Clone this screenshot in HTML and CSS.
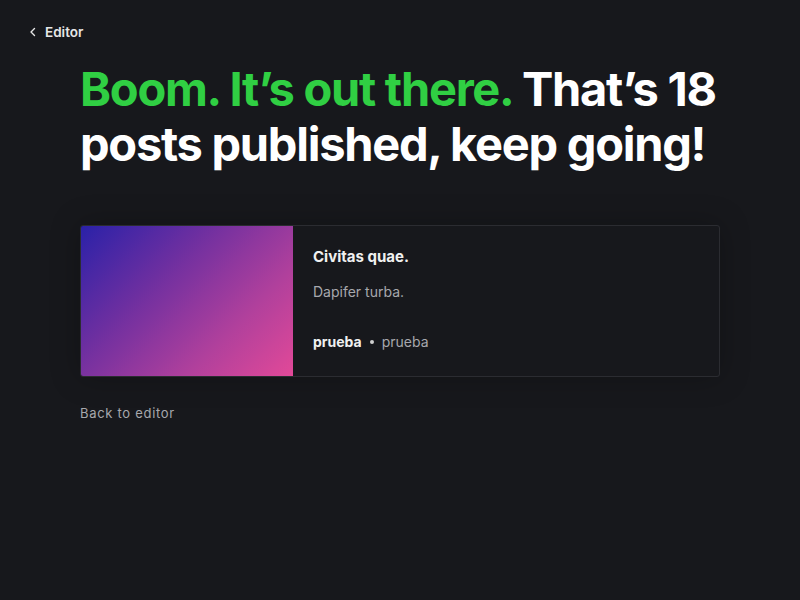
FILE: index.html
```html
<!DOCTYPE html>
<html>
<head>
<meta charset="utf-8">
<link rel="stylesheet" href="styles.css">
</head>
<body>
<header class="topbar">
  <a class="back-link" href="#">
    <svg class="chev" width="8" height="10" viewBox="0 0 8 10"><path d="M5.5 1.5 L2 5 L5.5 8.5" fill="none" stroke="#e6e6e6" stroke-width="1.4" stroke-linecap="round" stroke-linejoin="round"/></svg>
    <span>Editor</span>
  </a>
</header>
<main class="content">
  <h1 class="title"><span class="green">Boom. It’s out there.</span> That’s 18 posts published, keep going!</h1>
  <div class="card">
    <div class="thumb"></div>
    <div class="card-body">
      <div class="card-title">Civitas quae.</div>
      <div class="card-excerpt">Dapifer turba.</div>
      <div class="card-meta"><strong>prueba</strong><span class="dot"></span><span class="muted">prueba</span></div>
    </div>
  </div>
  <a class="back-editor" href="#">Back to editor</a>
</main>
</body>
</html>
```
FILE: styles.css
```css
html, body {
  margin: 0;
  padding: 0;
  background: #17181c;
  font-family: Inter, "Noto Sans", sans-serif;
  color: #fff;
}
a { text-decoration: none; }
.topbar {
  padding: 21px 0 0 29px;
  height: 20px;
}
.back-link {
  display: inline-flex;
  align-items: center;
  gap: 8px;
  color: #e6e6e6;
  font-size: 13.5px;
  font-weight: 600;
  line-height: 16px;
}
.content {
  padding: 0 80px;
}
.title {
  margin: 20px 0 0;
  font-size: 47px;
  font-weight: 700;
  line-height: 55px;
  letter-spacing: -0.027em;
  color: #fff;
}
.green { color: #30cf43; }
.card {
  margin-top: 54px;
  display: flex;
  height: 150px;
  border: 1px solid #2b2c31;
  border-radius: 3px;
  overflow: hidden;
  box-shadow: 0 0 30px rgba(0,0,0,0.25);
}
.thumb {
  width: 212px;
  flex: none;
  background: linear-gradient(135deg, #2a21a8 0%, #6e2fa0 35%, #b0409c 70%, #e24998 100%);
}
.card-body {
  padding: 21px 20px 0 20px;
  display: flex;
  flex-direction: column;
}
.card-title {
  font-size: 15px;
  font-weight: 700;
  color: #f0f0f0;
  line-height: 20px;
}
.card-excerpt {
  margin-top: 15px;
  font-size: 14px;
  color: #a7a8ad;
  line-height: 20px;
}
.card-meta {
  margin-top: 30px;
  font-size: 14px;
  line-height: 20px;
  display: flex;
  align-items: center;
  color: #f0f0f0;
}
.card-meta strong { font-weight: 700; }
.dot {
  width: 4px;
  height: 4px;
  border-radius: 50%;
  background: #d0d0d0;
  margin: 0 8px;
}
.muted { color: #a7a8ad; }
.back-editor {
  display: inline-block;
  margin-top: 28px;
  font-size: 13px;
  color: #a7a8ad;
  letter-spacing: 0.7px;
}
```
